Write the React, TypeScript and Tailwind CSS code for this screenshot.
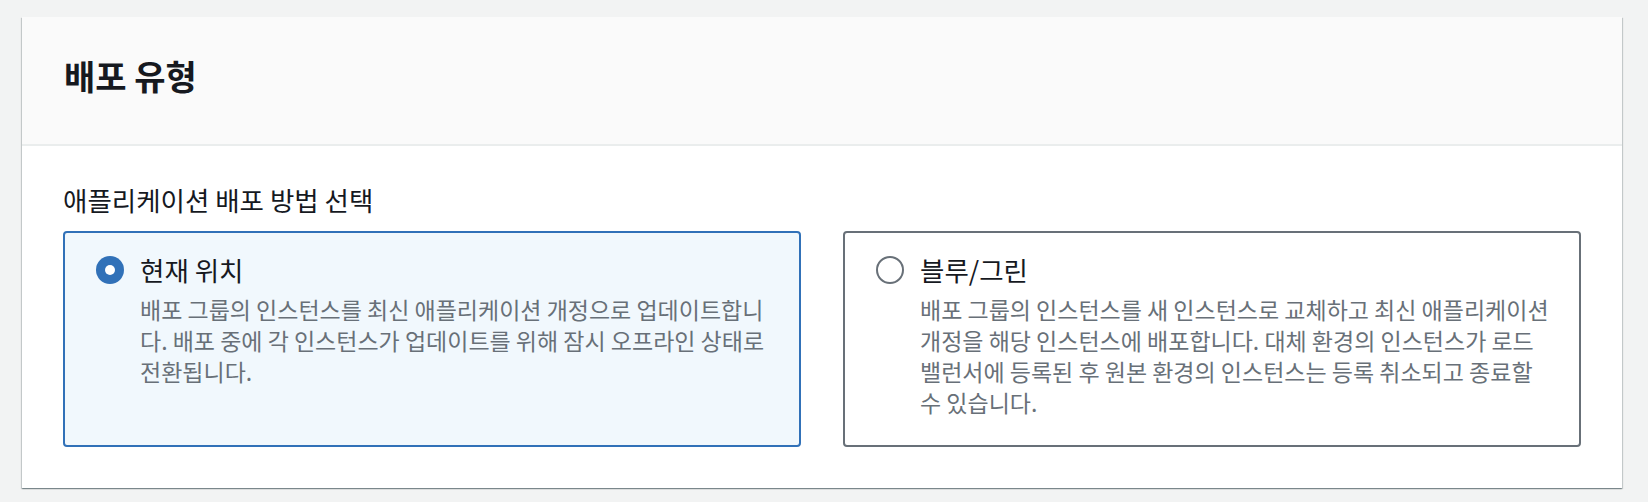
// Deployment type panel: header strip, a field label and two radio tiles.
import { useState } from 'react';

type Option = {
  id: string;
  label: string;
  // Description kept as explicit lines so the wrap matches the original.
  lines: string[];
};

const OPTIONS: Option[] = [
  {
    id: 'in-place',
    label: '현재 위치',
    lines: [
      '배포 그룹의 인스턴스를 최신 애플리케이션 개정으로 업데이트합니',
      '다. 배포 중에 각 인스턴스가 업데이트를 위해 잠시 오프라인 상태로',
      '전환됩니다.',
    ],
  },
  {
    id: 'blue-green',
    label: '블루/그린',
    lines: [
      '배포 그룹의 인스턴스를 새 인스턴스로 교체하고 최신 애플리케이션',
      '개정을 해당 인스턴스에 배포합니다. 대체 환경의 인스턴스가 로드',
      '밸런서에 등록된 후 원본 환경의 인스턴스는 등록 취소되고 종료할',
      '수 있습니다.',
    ],
  },
];

function Radio({ checked }: { checked: boolean }) {
  if (checked) {
    return (
      <span className="flex h-7 w-7 shrink-0 items-center justify-center rounded-full bg-[#3171b8]">
        <span className="h-[10px] w-[10px] rounded-full bg-white" />
      </span>
    );
  }
  return <span className="h-7 w-7 shrink-0 rounded-full border-2 border-[#687078] bg-white" />;
}

function Tile({ option, checked, onSelect }: { option: Option; checked: boolean; onSelect: () => void }) {
  return (
    <button
      type="button"
      onClick={onSelect}
      className={`flex items-start gap-4 rounded-[4px] border-2 pt-[21px] pb-[27px] pl-[31px] pr-6 text-left ${
        checked ? 'border-[#3171b8] bg-[#f1f8fd]' : 'border-[#687078] bg-white'
      }`}
    >
      <span className="flex h-8 items-center">
        <Radio checked={checked} />
      </span>
      <span className="flex flex-col">
        <span className="text-[26.5px] leading-8 text-[#16191f]">{option.label}</span>
        <span className="mt-2 flex flex-col text-[23px] leading-[31px] text-[#687078]">
          {option.lines.map((line) => (
            <span key={line} className="whitespace-nowrap">
              {line}
            </span>
          ))}
        </span>
      </span>
    </button>
  );
}

export default function App() {
  const [selected, setSelected] = useState('in-place');

  return (
    <div
      className="min-h-[502px] bg-[#f2f3f3] pt-[17px] pl-[22px] pr-[26px] pb-4"
      style={{ fontFamily: '"Noto Sans CJK KR", "Noto Sans", sans-serif' }}
    >
      <section className="bg-white shadow-[0_1px_1px_0_rgba(0,28,36,0.3),1px_1px_1px_0_rgba(0,28,36,0.15),-1px_1px_1px_0_rgba(0,28,36,0.15)]">
        <header className="h-[129px] border-b-2 border-[#eaeded] bg-[#fafafa] pt-[41px] pl-[42px]">
          <h2 className="text-[34px] font-bold leading-9 text-[#16191f]">배포 유형</h2>
        </header>
        <div className="px-[41px] pt-[38px] pb-[41px]">
          <div className="text-[26.5px] leading-8 text-[#16191f]">애플리케이션 배포 방법 선택</div>
          <div className="mt-[15px] grid grid-cols-2 gap-[42px]">
            {OPTIONS.map((o) => (
              <Tile key={o.id} option={o} checked={selected === o.id} onSelect={() => setSelected(o.id)} />
            ))}
          </div>
        </div>
      </section>
    </div>
  );
}
